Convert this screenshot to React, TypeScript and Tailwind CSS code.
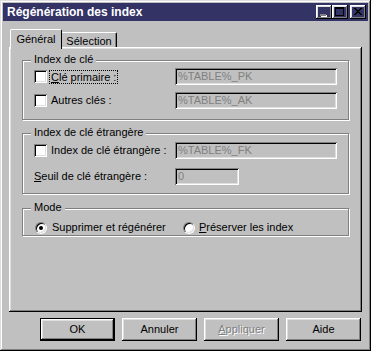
import React from "react";

const raised =
  "shadow-[inset_-1px_-1px_0_#000,inset_1px_1px_0_#fff,inset_-2px_-2px_0_#808080,inset_2px_2px_0_#dfdfdf]";
const frame =
  "shadow-[inset_-1px_-1px_0_#000,inset_1px_1px_0_#dfdfdf,inset_-2px_-2px_0_#808080,inset_2px_2px_0_#fff]";
const sunken =
  "shadow-[inset_1px_1px_0_#808080,inset_-1px_-1px_0_#fff,inset_2px_2px_0_#000,inset_-2px_-2px_0_#dfdfdf]";

function Checkbox() {
  return <div className={`w-[13px] h-[13px] bg-white shrink-0 ${sunken}`} />;
}

function Radio({ checked }: { checked?: boolean }) {
  return (
    <div className="w-[12px] h-[12px] shrink-0 rounded-full border border-t-[#808080] border-l-[#808080] border-b-white border-r-white">
      <div className="w-full h-full rounded-full bg-white shadow-[inset_1px_1px_0_#000,inset_-1px_-1px_0_#dfdfdf] flex items-center justify-center">
        {checked && <div className="w-[4px] h-[4px] rounded-full bg-black" />}
      </div>
    </div>
  );
}

function Field({ w, value }: { w: string; value: string }) {
  return (
    <div className={`${w} h-[17px] pl-[3px] flex items-center text-[#808080] ${sunken}`}>
      {value}
    </div>
  );
}

function Group({ title, className, children }: { title: string; className?: string; children: React.ReactNode }) {
  return (
    <div
      className={`relative border border-[#808080] shadow-[1px_1px_0_#fff,inset_1px_1px_0_#fff] ${className ?? ""}`}
    >
      <span className="absolute -top-[8px] left-[8px] px-[3px] leading-[13px] bg-[#c0c0c0]">{title}</span>
      {children}
    </div>
  );
}

function Button({
  children,
  def,
  disabled,
}: {
  children: React.ReactNode;
  def?: boolean;
  disabled?: boolean;
}) {
  if (def) {
    return (
      <div className="w-[75px] h-[23px] border border-black">
        <div className={`w-full h-full flex items-center justify-center ${raised}`}>{children}</div>
      </div>
    );
  }
  return (
    <div
      className={`w-[75px] h-[23px] flex items-center justify-center ${raised} ${
        disabled ? "text-[#808080] [text-shadow:1px_1px_0_#fff]" : ""
      }`}
    >
      {children}
    </div>
  );
}

export default function App() {
  return (
    <div
      className={`w-[371px] h-[351px] bg-[#c0c0c0] p-[3px] text-[11px] leading-[13px] text-black font-['Liberation_Sans',Arial,sans-serif] ${frame}`}
    >
      {/* Title bar */}
      <div className="h-[18px] bg-[#333366] flex items-center pl-[4px] pr-[2px]">
        <span className="text-white font-bold text-[12px] leading-[14px] flex-1">Régénération des index</span>
        <div className="flex items-center">
          <div className={`w-[16px] h-[14px] ${raised} relative`}>
            <div className="absolute left-[4px] top-[9px] w-[6px] h-[2px] bg-[#808080] shadow-[1px_1px_0_#fff]" />
          </div>
          <div className={`w-[16px] h-[14px] ${raised} flex items-center justify-center`}>
            <div className="w-[9px] h-[9px] border border-black border-t-2 -mt-[1px] -ml-[1px]" />
          </div>
          <div className={`w-[16px] h-[14px] ml-[2px] ${raised} flex items-center justify-center`}>
            <svg width="8" height="7" viewBox="0 0 8 7" className="-mt-[1px] -ml-[1px]">
              <path
                d="M0 0h2v1h1v1h2V1h1V0h2v1H7v1H6v1H5v1h1v1h1v1h1v1H6V6H5V5H3v1H2v1H0V6h1V5h1V4h1V3H2V2H1V1H0z"
                fill="#000"
              />
            </svg>
          </div>
        </div>
      </div>

      {/* Body */}
      <div className="px-[6px] pt-[8px]">
        {/* Tabs */}
        <div className="h-[18px] flex items-end pl-[1px]">
          <div className="relative z-10 w-[52px] h-[20px] -mb-[2px] bg-[#c0c0c0] border-l border-t border-white border-r border-r-black rounded-tl-[2px] rounded-tr-[2px] flex justify-center pt-[3px]">
            Général
          </div>
          <div className="w-[55px] h-[15px] border-t border-white border-r border-r-black rounded-tr-[2px] shadow-[inset_-1px_0_0_#808080] flex justify-center pt-[2px]">
            Sélection
          </div>
        </div>

        {/* Panel */}
        <div className={`h-[265px] px-[13px] pt-[13px] ${raised}`}>
          <Group title="Index de clé" className="pt-[7px] pb-[10px]">
            <div className="flex items-center h-[17px] pl-[11px]">
              <div className="w-[141px] flex items-center">
                <Checkbox />
                <span className="ml-[2px] px-[1px] border border-dotted border-black leading-[12px]">
                  <span className="underline">C</span>lé primaire :
                </span>
              </div>
              <Field w="w-[162px]" value="%TABLE%_PK" />
            </div>
            <div className="flex items-center h-[17px] pl-[11px] mt-[7px]">
              <div className="w-[141px] flex items-center">
                <Checkbox />
                <span className="ml-[4px]">Autres clés :</span>
              </div>
              <Field w="w-[162px]" value="%TABLE%_AK" />
            </div>
          </Group>

          <Group title="Index de clé étrangère" className="mt-[13px] pt-[8px] pb-[8px]">
            <div className="flex items-center h-[17px] pl-[11px]">
              <div className="w-[141px] flex items-center">
                <Checkbox />
                <span className="ml-[4px]">Index de clé étrangère :</span>
              </div>
              <Field w="w-[162px]" value="%TABLE%_FK" />
            </div>
            <div className="flex items-center h-[17px] pl-[11px] mt-[9px]">
              <div className="w-[141px]">
                <span className="underline">S</span>euil de clé étrangère :
              </div>
              <Field w="w-[64px]" value="0" />
            </div>
          </Group>

          <Group title="Mode" className="mt-[14px] pt-[12px] pb-[1px]">
            <div className="flex items-center h-[13px] pl-[12px]">
              <div className="w-[148px] flex items-center">
                <Radio checked />
                <span className="ml-[5px]">Supprimer et régénérer</span>
              </div>
              <Radio />
              <span className="ml-[4px]">
                <span className="underline">P</span>réserver les index
              </span>
            </div>
          </Group>
        </div>

        {/* Buttons */}
        <div className="flex justify-end gap-[7px] mt-[6px] pr-[1px]">
          <Button def>OK</Button>
          <Button>Annuler</Button>
          <Button disabled>
            <span>
              <span className="underline">A</span>ppliquer
            </span>
          </Button>
          <Button>Aide</Button>
        </div>
      </div>
    </div>
  );
}
